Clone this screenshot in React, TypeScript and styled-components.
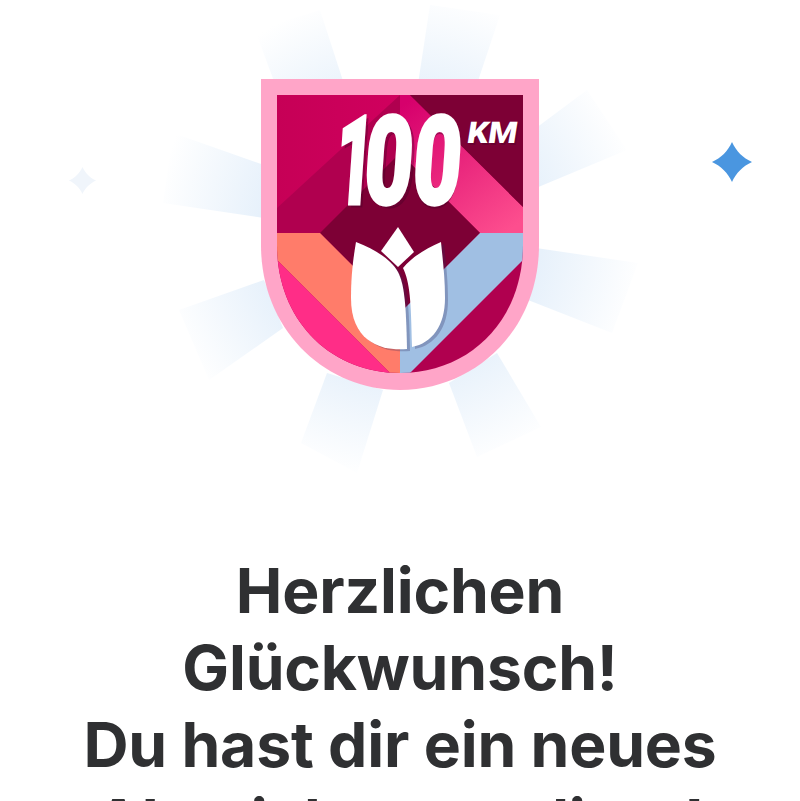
import React from 'react';
import styled, { createGlobalStyle } from 'styled-components';

const GlobalStyle = createGlobalStyle`
  html, body {
    margin: 0;
    padding: 0;
    height: 100%;
    background: #fff;
    overflow: hidden;
  }
`;

const Page = styled.main`
  width: 800px;
  height: 801px;
  overflow: hidden;
  background: #fff;
  display: flex;
  flex-direction: column;
  align-items: center;
`;

const Illustration = styled.svg`
  display: block;
  width: 800px;
  height: 552px;
  flex: none;
`;

const Heading = styled.h1`
  margin: 0;
  width: 720px;
  text-align: center;
  font-family: Inter, 'Liberation Sans', sans-serif;
  font-size: 62.4px;
  font-weight: 700;
  line-height: 77px;
  letter-spacing: -0.2px;
  color: #2f3032;
`;

const BigNumber = styled.text<{ $shadow?: boolean }>`
  font-family: Roboto, 'Liberation Sans', sans-serif;
  font-size: 124px;
  font-weight: 900;
  fill: ${(p) => (p.$shadow ? 'rgba(70, 0, 40, 0.32)' : '#fff')};
  stroke: ${(p) => (p.$shadow ? 'rgba(70, 0, 40, 0.32)' : '#fff')};
  stroke-width: ${(p) => (p.$shadow ? 1 : 3)}px;
`;

const Unit = styled.text<{ $shadow?: boolean }>`
  font-family: Roboto, 'Liberation Sans', sans-serif;
  font-size: 30px;
  font-weight: 900;
  fill: ${(p) => (p.$shadow ? 'rgba(70, 0, 40, 0.35)' : '#fff')};
`;

const RAYS = [
  '275,84 344,84 320,10 255,30',
  '418,84 477,84 500,15 430,5',
  '536,128 536,188 627,150 587,90',
  '536,248 528,300 612,333 638,263',
  '449,383 497,353 541,427 477,457',
  '327,373 383,390 357,473 301,443',
  '264,280 283,328 209,380 179,310',
  '264,165 264,218 163,203 173,133',
];

const OUTER = 'M261 79 H539 V245 C539 330 475 390 400 390 C325 390 261 330 261 245 Z';
const INNER = 'M277 95 H523 V245 C523 320 470 373 400 373 C330 373 277 320 277 245 Z';
const LEFT_PETAL =
  'M356 242 C374 249 391 259 398 272 C404 284 406 300 407 349 C384 351 351 344 351 298 C351 276 353 260 356 242 Z';
const RIGHT_PETAL =
  'M441 242 C443 262 445 278 445 298 C445 326 432 343 412 347 C411 300 410 283 403 268 C413 256 427 248 441 242 Z';
const SPARKLE = 'M0 -20 C4 -11 11 -4 20 0 C11 4 4 11 0 20 C-4 11 -11 4 -20 0 C-11 -4 -4 -11 0 -20 Z';

// one run of digits with its drop shadow, squeezed to the badge's condensed look
const Digits: React.FC<{ left: number; squeeze: number; text: string; offsets: string }> = ({
  left,
  squeeze,
  text,
  offsets,
}) => (
  <g transform={`translate(${left} 204) skewX(-4) scale(${squeeze} 1)`}>
    <BigNumber $shadow x={offsets} dx="5" y="3">
      {text}
    </BigNumber>
    <BigNumber x={offsets} y="0">
      {text}
    </BigNumber>
  </g>
);

const Badge: React.FC = () => (
  <g>
    <clipPath id="shield">
      <path d={INNER} />
    </clipPath>
    <path d={OUTER} fill="#ffa5c8" />
    <g clipPath="url(#shield)">
      <rect x="277" y="95" width="246" height="280" fill="#b0004f" />
      <polygon points="277,95 400,95 277,208" fill="url(#crimson)" />
      <polygon points="400,95 410,95 523,207 523,233 480,233 400,153" fill="url(#magenta)" />
      <polygon points="410,95 523,95 523,207" fill="#7d0035" />
      <polygon points="320,233 400,153 480,233 400,313" fill="#7d0035" />
      <polygon points="277,233 320,233 400,313 400,375 392,375 277,260" fill="#ff7c6a" />
      <polygon points="277,260 392,375 277,375" fill="#ff2d87" />
      <polygon points="480,233 523,233 523,260 408,375 400,375 400,313" fill="#a0bfe3" />
    </g>

    <g transform="translate(3 2)">
      <path d={LEFT_PETAL} fill="rgba(50, 40, 90, 0.28)" />
      <path d={RIGHT_PETAL} fill="rgba(50, 40, 90, 0.28)" />
    </g>
    <path d={LEFT_PETAL} fill="#fff" />
    <path d={RIGHT_PETAL} fill="#fff" />
    <polygon points="398,227 414,252 398,267 381,251" fill="#fff" />

    <Digits left={333} squeeze={0.525} text="1" offsets="0" />
    <Digits left={362} squeeze={0.675} text="00" offsets="0 72" />
    <g transform="translate(466 143) skewX(-9) scale(1.1 1)">
      <Unit $shadow x="1.5" y="1.5">
        KM
      </Unit>
      <Unit x="0" y="0">
        KM
      </Unit>
    </g>
  </g>
);

const App: React.FC = () => (
  <Page>
    <GlobalStyle />
    <Illustration viewBox="0 0 800 552" role="img" aria-label="100 KM Abzeichen">
      <defs>
        <radialGradient id="ray" gradientUnits="userSpaceOnUse" cx="400" cy="235" r="245">
          <stop offset="0.58" stopColor="#e7f1fb" />
          <stop offset="1" stopColor="#ffffff" />
        </radialGradient>
        <linearGradient id="crimson" x1="0" y1="0" x2="1" y2="0">
          <stop offset="0" stopColor="#c60056" />
          <stop offset="1" stopColor="#d0005e" />
        </linearGradient>
        <linearGradient id="magenta" gradientUnits="userSpaceOnUse" x1="410" y1="100" x2="510" y2="230">
          <stop offset="0" stopColor="#d6006c" />
          <stop offset="1" stopColor="#fd4e8e" />
        </linearGradient>
      </defs>
      {RAYS.map((points) => (
        <polygon key={points} points={points} fill="url(#ray)" />
      ))}
      <path d={SPARKLE} transform="translate(732 162)" fill="#4a96e0" />
      <path d={SPARKLE} transform="translate(82.5 180.5) scale(0.68)" fill="#f0f5fb" />
      <Badge />
    </Illustration>
    <Heading>
      Herzlichen
      <br />
      Glückwunsch!
      <br />
      Du hast dir ein neues Abzeichen verdient!
    </Heading>
  </Page>
);

export default App;
